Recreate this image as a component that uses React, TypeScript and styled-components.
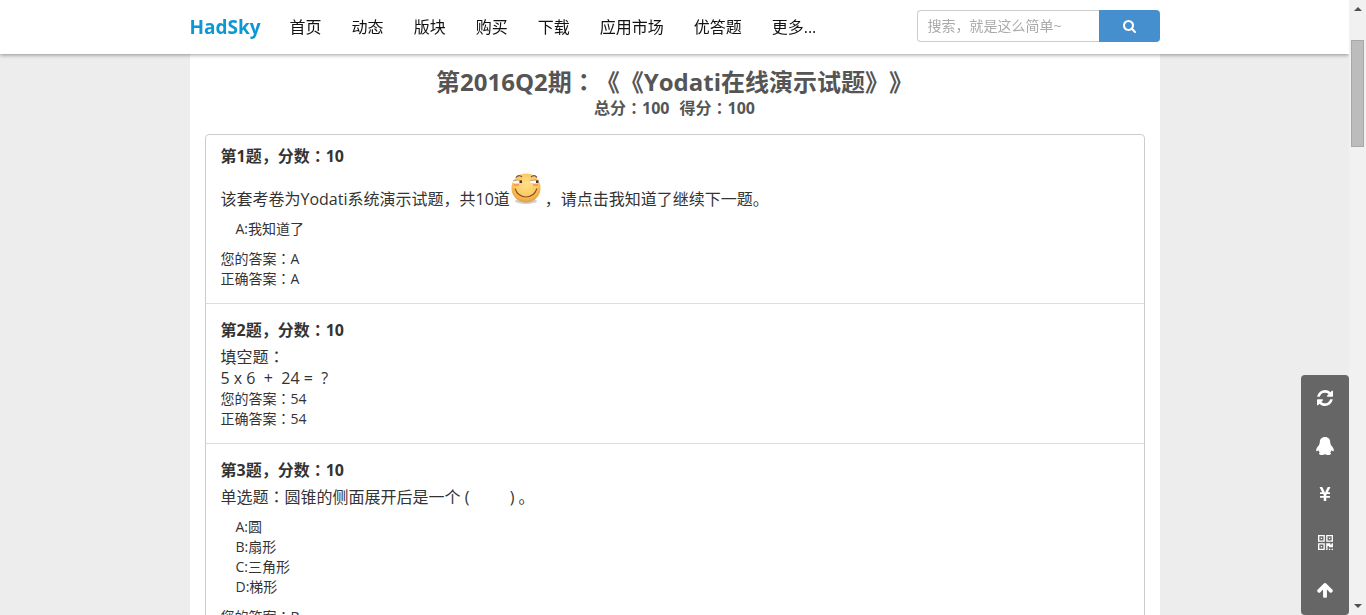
import React from 'react';
import styled, { createGlobalStyle, css } from 'styled-components';
import { FaYenSign } from 'react-icons/fa';

const GlobalStyle = createGlobalStyle`
  *, *::before, *::after { box-sizing: border-box; }
  body {
    margin: 0;
    background: #ededed;
    color: #333;
    font-family: "Open Sans", "Noto Sans CJK SC", sans-serif;
    font-size: 14px;
    line-height: 20px;
    text-spacing-trim: space-all;
  }
  h1, h2, p, ul { margin: 0; padding: 0; }
  ul { list-style: none; }
  a { color: inherit; text-decoration: none; }
`;

const Shell = styled.div`
  display: flex;
  height: 100vh;
`;

const Viewport = styled.div`
  flex: 1;
  min-width: 0;
  overflow-y: auto;
  scrollbar-width: none;
`;

const Header = styled.header`
  position: sticky;
  top: 0;
  z-index: 2;
  background: #fff;
  box-shadow: 0 1px 4px rgba(0, 0, 0, 0.4);
`;

const HeaderInner = styled.div`
  display: flex;
  align-items: center;
  max-width: 970px;
  height: 54px;
  margin: 0 auto;
`;

const Brand = styled.a`
  margin-right: 14px;
  color: #0e97d5;
  font-size: 19px;
  font-weight: 700;
`;

const Nav = styled.nav`
  display: flex;
  flex: 1;
`;

const NavLink = styled.a`
  padding: 0 15px;
  color: #111;
  font-size: 16px;
  line-height: 24px;
  white-space: nowrap;
`;

const SearchForm = styled.form`
  display: flex;
  width: 243px;
  height: 32px;
  margin-bottom: 2px;
`;

const SearchInput = styled.input`
  flex: 1;
  min-width: 0;
  padding: 0 10px;
  border: 1px solid #ccc;
  border-right: 0;
  border-radius: 4px 0 0 4px;
  background: #fff;
  color: #333;
  font: inherit;
  &::placeholder { color: #aaa; opacity: 1; }
`;

const SearchButton = styled.button`
  display: flex;
  align-items: center;
  justify-content: center;
  width: 61px;
  padding: 0;
  border: 0;
  border-radius: 0 4px 4px 0;
  background: #458fce;
  color: #fff;
`;

const Sheet = styled.main`
  max-width: 970px;
  margin: 0 auto;
  padding: 14px 15px 15px;
  background: #fff;
`;

const Title = styled.h1`
  color: #555;
  font-size: 24px;
  line-height: 28px;
  text-align: center;
`;

const Score = styled.p`
  display: flex;
  justify-content: center;
  gap: 10px;
  margin-bottom: 14px;
  color: #555;
  font-size: 16px;
  font-weight: 700;
  line-height: 24px;
`;

const Paper = styled.div`
  border: 1px solid #ccc;
  border-radius: 4px;
`;

const Question = styled.section`
  padding: 15px 15px 14px;
  border-bottom: 1px solid #ddd;
  &:first-child { padding-top: 10px; }
  &:last-child { border-bottom: 0; }
`;

const QuestionTitle = styled.h2`
  margin-bottom: 6px;
  font-size: 16px;
  line-height: 22px;
`;

const Prompt = styled.p`
  font-size: 16px;
  line-height: 21px;
  white-space: pre-wrap;
`;

const Options = styled.ul`
  margin: 9px 15px 10px;
`;

const Face = styled.svg`
  width: 32px;
  height: 32px;
  margin: 0 2px 0 1px;
`;

const Colon = styled.span`
  font-family: "Noto Sans CJK TC", sans-serif;
  line-height: 1;
`;

const SideBar = styled.aside`
  position: fixed;
  right: 17px;
  bottom: 0;
  z-index: 3;
  border-radius: 4px;
  background: #666;
`;

const SideButton = styled.button`
  display: flex;
  align-items: center;
  justify-content: center;
  width: 48px;
  height: 48px;
  padding: 0 0 2px;
  border: 0;
  background: none;
  color: #fff;
`;

const ScrollTrack = styled.div`
  display: flex;
  flex-direction: column;
  align-items: center;
  width: 17px;
  padding: 7px 0;
  background: #f1f1f1;
`;

const ScrollArrow = styled.span<{ $down?: boolean }>`
  border: 4px solid transparent;
  ${({ $down }) =>
    $down
      ? css`border-top-color: #505050; border-bottom: 0; margin-top: auto;`
      : css`border-bottom-color: #505050; border-top: 0;`}
`;

const ScrollThumb = styled.span`
  width: 13px;
  height: 107px;
  margin-top: 29px;
  border: 1px solid #a8a8a8;
  background: #bcbcbc;
`;

/* Full-width colons are set in the middle of their cell. */
const Zh = ({ children }: { children: string }) => (
  <>
    {children.split(/(：)/).map((part, i) =>
      i % 2 ? <Colon key={i}>{part}</Colon> : part
    )}
  </>
);

const SearchIcon = () => (
  <svg width="13" height="13" viewBox="0 0 1664 1664" fill="currentColor" aria-hidden="true">
    <path d="M1152 704q0-185-131.5-316.5t-316.5-131.5-316.5 131.5-131.5 316.5 131.5 316.5 316.5 131.5 316.5-131.5 131.5-316.5zm512 832q0 52-38 90t-90 38q-54 0-90-38l-343-342q-179 124-399 124-143 0-273.5-55.5t-225-150-150-225-55.5-273.5 55.5-273.5 150-225 225-150 273.5-55.5 273.5 55.5 225 150 150 225 55.5 273.5q0 220-124 399l343 343q37 37 37 90z" />
  </svg>
);

const RefreshIcon = () => (
  <svg width="16" height="16" viewBox="0 0 1536 1536" fill="currentColor" aria-hidden="true">
    <path d="M1511 928q0 5-1 7-64 268-268 434.5t-478 166.5q-146 0-282.5-55t-243.5-157l-129 129q-19 19-45 19t-45-19-19-45v-448q0-26 19-45t45-19h448q26 0 45 19t19 45-19 45l-137 137q71 66 161 102t187 36q134 0 250-65t186-179q11-17 53-117 8-23 30-23h192q13 0 22.5 9.5t9.5 22.5zm25-800v448q0 26-19 45t-45 19h-448q-26 0-45-19t-19-45 19-45l138-138q-148-137-349-137-134 0-250 65t-186 179q-11 17-53 117-8 23-30 23h-199q-13 0-22.5-9.5t-9.5-22.5v-7q65-268 270-434.5t480-166.5q146 0 284 55.5t245 156.5l130-129q19-19 45-19t45 19 19 45z" />
  </svg>
);

const PenguinIcon = () => (
  <svg width="18" height="18" viewBox="0 0 18 18" fill="currentColor" aria-hidden="true">
    <path d="M9 0C5.400 0 3.600 2.600 3.800 6C3.300 6.700 3.100 7.300 3.200 8C1.200 9.800 0 12 .2 13.700C.6 14.600 1.600 14 2.300 12.900C2.600 14 3.200 14.800 3.900 15.400C2.400 16.200 2.800 17.600 4.600 17.900C6.400 18.100 8.200 17.700 9 17C9.800 17.700 11.600 18.100 13.400 17.900C15.200 17.600 15.600 16.200 14.100 15.400C14.800 14.800 15.400 14 15.700 12.900C16.400 14 17.400 14.600 17.800 13.700C18 12 16.800 9.800 14.800 8C14.900 7.300 14.700 6.700 14.200 6C14.400 2.600 12.600 0 9 0Z" />
  </svg>
);

const QrCodeIcon = () => (
  <svg width="15" height="15" viewBox="0 0 1408 1408" fill="currentColor" aria-hidden="true">
    <path d="M384 1024v128h-128v-128h128zm0-768v128h-128v-128h128zm768 0v128h-128v-128h128zm-1024 1023h384v-383h-384v383zm0-767h384v-384h-384v384zm768 0h384v-384h-384v384zm-256 256v640h-640v-640h640zm512 512v128h-128v-128h128zm256 0v128h-128v-128h128zm0-512v384h-384v-128h-128v384h-128v-640h384v128h128v-128h128zm-768-768v640h-640v-640h640zm768 0v640h-640v-640h640z" />
  </svg>
);

const ArrowUpIcon = () => (
  <svg width="18" height="18" viewBox="0 0 1792 1792" fill="currentColor" aria-hidden="true">
    <path d="M1675 971q0 51-37 90l-75 75q-38 38-91 38-54 0-90-38l-294-293v704q0 52-37.5 84.5t-90.5 32.5h-128q-53 0-90.5-32.5t-37.5-84.5v-704l-294 293q-36 38-90 38t-90-38l-75-75q-38-38-38-90 0-53 38-91l651-651q35-37 90-37 54 0 91 37l651 651q37 39 37 91z" />
  </svg>
);

const SmirkFace = () => (
  <Face viewBox="0 0 32 32" role="img" aria-label="滑稽">
    <defs>
      <radialGradient id="skin" cx="50%" cy="38%" r="62%">
        <stop offset="0" stopColor="#ffe08a" />
        <stop offset="0.65" stopColor="#fdc860" />
        <stop offset="1" stopColor="#e79a3c" />
      </radialGradient>
    </defs>
    <ellipse cx="15" cy="28" rx="11" ry="3" fill="#888" opacity="0.4" />
    <circle cx="15" cy="15" r="14.500" fill="url(#skin)" />
    <path d="M5 4.500q3-3.500 6-.5M20 4q3-3 6 .5" fill="none" stroke="#6b5a48" strokeWidth="1.200" />
    <path d="M2 8q4-1.500 9-.5v2.300q-4 .8-9 .2zM19 7.500q5-1 9 .5v2q-5 .6-9-.2z" fill="#fff" />
    <path d="M2 8q4-1.500 9-.5M19 7.500q5-1 9 .5" fill="none" stroke="#b07a3c" strokeWidth="0.700" />
    <path d="M8.500 7.500h2.500v2.500h-2.500zM25 7.500h2.500v2.500h-2.500z" fill="#5a2c20" />
    <path d="M3 12h5M22 12h5" stroke="#f4825c" strokeWidth="1.800" opacity="0.650" />
    <path d="M4 15.500q3 8.500 11 8.500t11-8.500" fill="none" stroke="#8a5420" strokeWidth="1.200" />
  </Face>
);

const navItems = ['首页', '动态', '版块', '购买', '下载', '应用市场', '优答题', '更多...'];

const questions: { prompt: React.ReactNode; options: string[]; given: string; correct: string }[] = [
  {
    prompt: (
      <>
        <Zh>该套考卷为Yodati系统演示试题，共10道</Zh>
        <SmirkFace />
        <Zh>，请点击我知道了继续下一题。</Zh>
      </>
    ),
    options: ['A:我知道了'],
    given: 'A',
    correct: 'A',
  },
  { prompt: <Zh>{'填空题：\n5 x 6  +  24 =  ?'}</Zh>, options: [], given: '54', correct: '54' },
  {
    prompt: <Zh>{'单选题：圆锥的侧面展开后是一个 (\u3000\u3000  ) 。'}</Zh>,
    options: ['A:圆', 'B:扇形', 'C:三角形', 'D:梯形'],
    given: 'B',
    correct: 'B',
  },
];

const sideActions = [
  { label: '刷新', icon: <RefreshIcon /> },
  { label: 'QQ', icon: <PenguinIcon /> },
  { label: '充值', icon: <FaYenSign size={16} /> },
  { label: '二维码', icon: <QrCodeIcon /> },
  { label: '返回顶部', icon: <ArrowUpIcon /> },
];

export default function App() {
  return (
    <>
      <GlobalStyle />
      <Shell>
        <Viewport>
          <Header>
            <HeaderInner>
              <Brand href="#">HadSky</Brand>
              <Nav>
                {navItems.map((item) => (
                  <NavLink key={item} href="#">{item}</NavLink>
                ))}
              </Nav>
              <SearchForm role="search">
                <SearchInput type="text" aria-label="搜索" placeholder="搜索，就是这么简单~" />
                <SearchButton type="button" aria-label="搜索">
                  <SearchIcon />
                </SearchButton>
              </SearchForm>
            </HeaderInner>
          </Header>
          <Sheet>
            <Title><Zh>第2016Q2期：《《Yodati在线演示试题》》</Zh></Title>
            <Score>
              <span><Zh>总分：100</Zh></span>
              <span><Zh>得分：100</Zh></span>
            </Score>
            <Paper>
              {questions.map((q, i) => (
                <Question key={i}>
                  <QuestionTitle><Zh>{`第${i + 1}题，分数：10`}</Zh></QuestionTitle>
                  <Prompt>{q.prompt}</Prompt>
                  {q.options.length > 0 && (
                    <Options>
                      {q.options.map((o) => <li key={o}>{o}</li>)}
                    </Options>
                  )}
                  <p><Zh>{`您的答案：${q.given}`}</Zh></p>
                  <p><Zh>{`正确答案：${q.correct}`}</Zh></p>
                </Question>
              ))}
            </Paper>
          </Sheet>
        </Viewport>
        <ScrollTrack aria-hidden="true">
          <ScrollArrow />
          <ScrollThumb />
          <ScrollArrow $down />
        </ScrollTrack>
      </Shell>
      <SideBar>
        {sideActions.map((a) => (
          <SideButton key={a.label} type="button" aria-label={a.label}>{a.icon}</SideButton>
        ))}
      </SideBar>
    </>
  );
}
